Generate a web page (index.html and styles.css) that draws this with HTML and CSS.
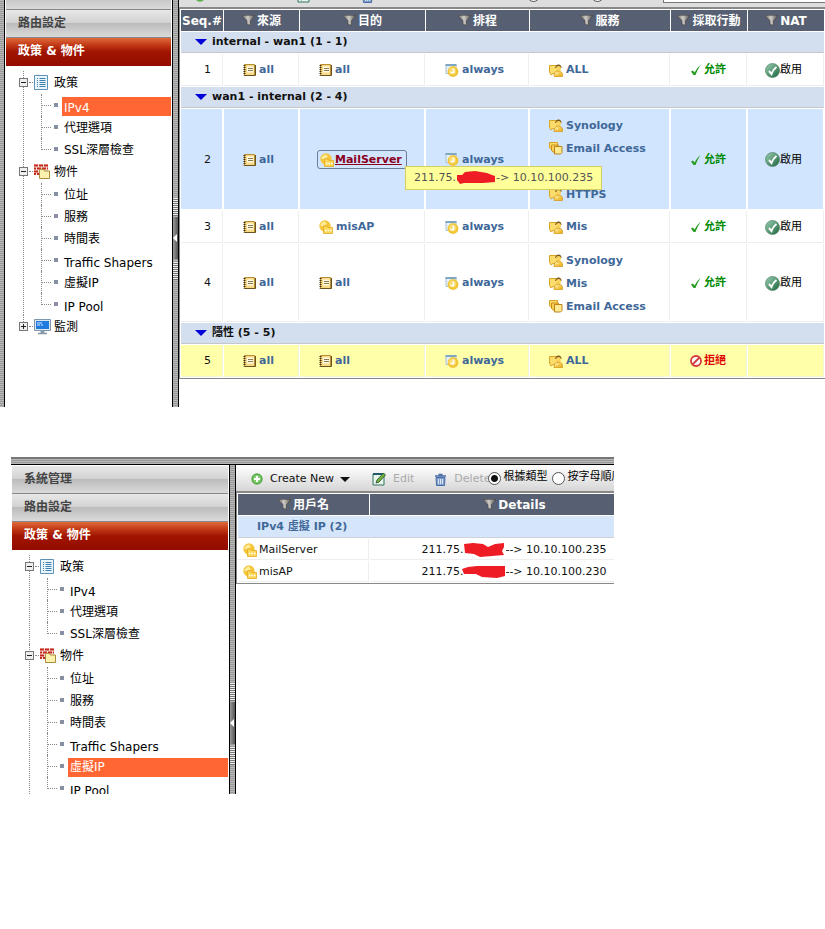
FILE: index.html
```html
<!DOCTYPE html>
<html lang="zh-Hant">
<head>
    <meta charset="UTF-8">
    <meta name="viewport" content="width=device-width, initial-scale=1.0">
    <title>政策 &amp; 物件</title>
    <link rel="stylesheet" href="styles.css">
</head>
<body>
    <!-- Icons -->
    <svg class="sprite" aria-hidden="true">
        <defs>
            <linearGradient id="g-gold" x1="0" y1="0" x2="1" y2="1"><stop offset="0" stop-color="#ffe98a"/><stop offset="1" stop-color="#e9ae1c"/></linearGradient>
            <linearGradient id="g-funnel"><stop offset="0" stop-color="#6c6a68"/><stop offset=".45" stop-color="#d0cdc8"/><stop offset="1" stop-color="#55524e"/></linearGradient>
            <linearGradient id="g-green" x1="0" y1="0" x2="1" y2="1"><stop offset="0" stop-color="#9fd2b4"/><stop offset="1" stop-color="#17623c"/></linearGradient>
        </defs>
        <symbol id="funnel" viewBox="0 0 13 11"><path d="M.3.300h12.400v1L8.500 5.500v5l-3.500-1.500V5.500L.3 1.300z" fill="url(#g-funnel)" stroke="#45423f" stroke-width=".6"/></symbol>
        <symbol id="book" viewBox="0 0 13 12">
            <path d="M1.500.5h10v11h-10z" fill="#f8da86" stroke="#b98f35"/><path d="M12.500 1v10.500H2" fill="none" stroke="#6b5320"/>
            <path d="M4 2.500h6.500v6H4z" fill="#fffbe6"/><path d="M5 4.500h5M5 6.500h5" stroke="#8c7a4c"/>
            <path d="M1.500 1v10.500" stroke="#3b2b0c" stroke-width="2" stroke-dasharray="1 1"/>
        </symbol>
        <symbol id="vip" viewBox="0 0 14 14">
            <circle cx="6" cy="6" r="5.700" fill="#f5c63a"/><path d="M1.500 6q0-4 4.500-4.500L8 4 4 6z" fill="#ffeb9a"/>
            <path d="M4.500 6h3.500l1 1.500h4.500v6h-9z" fill="#fbd75a" stroke="#e3a91e" stroke-width=".8"/><path d="M6 10.500h1.500M8.500 10.500H10M11 10.500h1.500" stroke="#fff" stroke-width="1.500"/>
        </symbol>
        <symbol id="clock" viewBox="0 0 14 13">
            <path d="M1 .5h10v9H1z" fill="#e6f0f7" stroke="#a9c2d3"/><path d="M.5 0h11v2H.5z" fill="#7fa6c3"/>
            <circle cx="8" cy="7.500" r="5.400" fill="#f2c537"/><circle cx="7.500" cy="7" r="3.500" fill="#f9dc72"/><path d="M8.500 4.500v4h-3" stroke="#fff" stroke-width="1.500" fill="none"/>
        </symbol>
        <symbol id="svc" viewBox="0 0 14 13">
            <path d="M.5 1.500h8v8H4l-2 1.500-1.500-3z" fill="#fbdc6c" stroke="#dba524"/>
            <path d="M6 4q1-4 4-3.500 2.700.5 2.500 3.500" fill="#7a5a20"/><circle cx="9.500" cy="4.500" r="2.500" fill="#f9d560"/>
            <path d="M5 12.500q0-5.500 4.500-5.500t4 5.500z" fill="url(#g-gold)" stroke="#d79b1c" stroke-width=".8"/><path d="M6 9.500q1.500-1.500 3 .5" stroke="#fff0ae" fill="none"/>
        </symbol>
        <symbol id="svcgroup" viewBox="0 0 14 13">
            <path d="M.5.5h8v7H3L.5 6z" fill="#fbdc6c" stroke="#d9a222"/><path d="M2.500 3h7v7.500H5l-2.500-2z" fill="#f8cf52" stroke="#c88f18"/>
            <path d="M5.500 4.500h7.500v6L11.500 12h-6z" fill="#ffe88e" stroke="#b9851a"/>
        </symbol>
        <symbol id="tick" viewBox="0 0 12 12"><path d="M1 7.500l2-1 1.500 2Q7 3.500 10.500 1q-3 4.500-5 10h-2z" fill="#2a9c22"/></symbol>
        <symbol id="deny" viewBox="0 0 12 12"><circle cx="6" cy="6" r="5" fill="#fff" stroke="#d63a3a" stroke-width="1.800"/><path d="M2.500 9.500l7-7" stroke="#d63a3a" stroke-width="1.800"/></symbol>
        <symbol id="enabled" viewBox="0 0 15 15"><circle cx="7.500" cy="7.500" r="7" fill="url(#g-green)" stroke="#4e7f64" stroke-width=".7"/><path d="M4 8l2.500 3Q8 6.500 11.500 4" fill="none" stroke="#fff" stroke-width="2"/></symbol>
        <symbol id="policy" viewBox="0 0 14 15">
            <path d="M.5.5h13v14H.5z" fill="#eaf5fc" stroke="#5c93b8"/>
            <path d="M3 3.500h1M5.500 3.500h6M3 5.500h1M5.500 5.500h6M3 7.500h1M5.500 7.500h6M3 9.500h1M5.500 9.500h6M3 11.500h1M5.500 11.500h6" stroke="#3d7fae"/>
        </symbol>
        <symbol id="objects" viewBox="0 0 16 15">
            <path d="M0 0h14v10H0z" fill="#f3dcd5"/>
            <path d="M0 1.500h14M0 7.500h8" stroke="#c6281c" stroke-width="2" stroke-dasharray="4 1"/><path d="M0 4.500h14M0 10h5" stroke="#c6281c" stroke-width="2" stroke-dasharray="4 1" stroke-dashoffset="2"/>
            <path d="M5.500 6.500q0-1 1-1h3l1 1.500h5v7.500h-10z" fill="#fdf1b0" stroke="#a78e3a"/>
        </symbol>
        <symbol id="monitor" viewBox="0 0 17 16">
            <path d="M.5.500h16v11H.5z" fill="#dce6ee" stroke="#7f97aa"/><path d="M2 2h13v8H2z" fill="#1f7be0"/>
            <path d="M3 4h5M3 6h3M7 6h2" stroke="#d7ecff"/><path d="M6.500 12h4v2h-4z" fill="#8f9dab"/><path d="M4 14.500h9" stroke="#8497a8" stroke-width="1.500"/>
        </symbol>
        <symbol id="add" viewBox="0 0 12 12"><circle cx="6" cy="6" r="5.700" fill="#5cae4c"/><circle cx="6" cy="6" r="4" fill="#82ca70"/><path d="M6 3v6M3 6h6" stroke="#fff" stroke-width="2"/></symbol>
        <symbol id="edit" viewBox="0 0 14 14"><path d="M1 2h11v11H1z" fill="#e8f3ea" stroke="#2e7465"/><path d="M1 2h11" stroke="#235a6b" stroke-width="2"/><path d="M4 11l1-3 6.500-7L13.500 3 7 10z" fill="#73b43c" stroke="#28492c" stroke-width=".8"/></symbol>
        <symbol id="trash" viewBox="0 0 11 13"><path d="M3.500 1.500h4M0 3h11" stroke="#4a6fa8" stroke-width="1.500"/><path d="M1 4.500h9l-.5 8h-8z" fill="#7e9cca" stroke="#4a6fa8"/><path d="M3.500 6v5M5.500 6v5M7.500 6v5" stroke="#dfe9f7"/></symbol>
    </svg>

    <!-- Firewall policy list -->
    <div class="frame frame-policy">
        <div class="edge"></div>
        <nav class="sidebar sidebar-policy">
            <div class="menu-rest"></div>
            <a class="menu" href="#">路由設定</a>
            <a class="menu menu-open" href="#">政策 &amp; 物件</a>
            <ul class="tree">
                <li>
                    <div class="node"><button class="toggle" aria-label="收合"></button><svg width="14" height="15"><use href="#policy"/></svg><a href="#">政策</a></div>
                    <ul>
                        <li><a class="selected latin" href="#">IPv4</a></li>
                        <li><a href="#">代理選項</a></li>
                        <li><a href="#">SSL深層檢查</a></li>
                    </ul>
                </li>
                <li>
                    <div class="node"><button class="toggle" aria-label="收合"></button><svg width="16" height="15"><use href="#objects"/></svg><a href="#">物件</a></div>
                    <ul>
                        <li><a href="#">位址</a></li>
                        <li><a href="#">服務</a></li>
                        <li><a href="#">時間表</a></li>
                        <li><a class="latin" href="#">Traffic Shapers</a></li>
                        <li><a href="#">虛擬IP</a></li>
                        <li><a class="latin" href="#">IP Pool</a></li>
                    </ul>
                </li>
                <li>
                    <div class="node"><button class="toggle closed" aria-label="展開"></button><svg width="17" height="16"><use href="#monitor"/></svg><a href="#">監測</a></div>
                </li>
            </ul>
        </nav>
        <div class="splitter splitter-policy"><div class="grip"></div><button class="handle" aria-label="收合選單"></button><div class="grip"></div></div>
        <main class="main">
            <div class="toolbar-rest">
                <svg class="rest-add" width="12" height="12"><use href="#add"/></svg>
                <svg class="rest-edit" width="14" height="14"><use href="#edit"/></svg>
                <svg class="rest-trash" width="11" height="13"><use href="#trash"/></svg>
                <input class="rest-radio rest-section" type="radio" name="view" aria-label="區段檢視">
                <input class="rest-radio" type="radio" name="view" aria-label="全域檢視">
                <input class="rest-search" type="text" aria-label="搜尋">
            </div>
            <table class="grid policy">
                <colgroup>
                    <col class="c-seq"><col class="c-src"><col class="c-dst"><col class="c-time"><col class="c-svc"><col class="c-act"><col>
                </colgroup>
                <thead>
                    <tr>
                        <th>Seq.#</th>
                        <th><svg width="13" height="11"><use href="#funnel"/></svg>來源</th>
                        <th><svg width="13" height="11"><use href="#funnel"/></svg>目的</th>
                        <th><svg width="13" height="11"><use href="#funnel"/></svg>排程</th>
                        <th><svg width="13" height="11"><use href="#funnel"/></svg>服務</th>
                        <th><svg width="13" height="11"><use href="#funnel"/></svg>採取行動</th>
                        <th><svg width="13" height="11"><use href="#funnel"/></svg>NAT</th>
                    </tr>
                </thead>
                <tbody>
                    <tr class="group"><td colspan="7"><button>internal - wan1 (1 - 1)</button></td></tr>
                    <tr>
                        <td class="seq">1</td>
                        <td><a class="obj" href="#"><svg width="13" height="12"><use href="#book"/></svg>all</a></td>
                        <td><a class="obj" href="#"><svg width="13" height="12"><use href="#book"/></svg>all</a></td>
                        <td><a class="obj" href="#"><svg width="14" height="13"><use href="#clock"/></svg>always</a></td>
                        <td><a class="obj" href="#"><svg width="14" height="13"><use href="#svc"/></svg>ALL</a></td>
                        <td><span class="act accept"><svg width="12" height="12"><use href="#tick"/></svg>允許</span></td>
                        <td><span class="nat"><svg width="15" height="15"><use href="#enabled"/></svg>啟用</span></td>
                    </tr>
                    <tr class="group"><td colspan="7"><button>wan1 - internal (2 - 4)</button></td></tr>
                    <tr class="picked">
                        <td class="seq">2</td>
                        <td><a class="obj" href="#"><svg width="13" height="12"><use href="#book"/></svg>all</a></td>
                        <td>
                            <div class="tip-anchor">
                                <a class="obj hovered" href="#"><svg width="14" height="14"><use href="#vip"/></svg><span>MailServer</span></a>
                                <div class="tip" role="tooltip">211.75.<svg class="mark" width="40" height="14" viewBox="0 0 40 14"><path d="M1 4h5l3-3 10-1 12 2 5 2 3 1v6l-12 1H8l-4 1-3-4z" fill="#ee1c25"/></svg>-&gt; 10.10.100.235</div>
                            </div>
                        </td>
                        <td><a class="obj" href="#"><svg width="14" height="13"><use href="#clock"/></svg>always</a></td>
                        <td>
                            <ul class="services">
                                <li><a class="obj" href="#"><svg width="14" height="13"><use href="#svc"/></svg>Synology</a></li>
                                <li><a class="obj" href="#"><svg width="14" height="13"><use href="#svcgroup"/></svg>Email Access</a></li>
                                <li></li>
                                <li><a class="obj" href="#"><svg width="14" height="13"><use href="#svc"/></svg>HTTPS</a></li>
                            </ul>
                        </td>
                        <td><span class="act accept"><svg width="12" height="12"><use href="#tick"/></svg>允許</span></td>
                        <td><span class="nat"><svg width="15" height="15"><use href="#enabled"/></svg>啟用</span></td>
                    </tr>
                    <tr>
                        <td class="seq">3</td>
                        <td><a class="obj" href="#"><svg width="13" height="12"><use href="#book"/></svg>all</a></td>
                        <td><a class="obj" href="#"><svg width="14" height="14"><use href="#vip"/></svg>misAP</a></td>
                        <td><a class="obj" href="#"><svg width="14" height="13"><use href="#clock"/></svg>always</a></td>
                        <td><a class="obj" href="#"><svg width="14" height="13"><use href="#svc"/></svg>Mis</a></td>
                        <td><span class="act accept"><svg width="12" height="12"><use href="#tick"/></svg>允許</span></td>
                        <td><span class="nat"><svg width="15" height="15"><use href="#enabled"/></svg>啟用</span></td>
                    </tr>
                    <tr>
                        <td class="seq">4</td>
                        <td><a class="obj" href="#"><svg width="13" height="12"><use href="#book"/></svg>all</a></td>
                        <td><a class="obj" href="#"><svg width="13" height="12"><use href="#book"/></svg>all</a></td>
                        <td><a class="obj" href="#"><svg width="14" height="13"><use href="#clock"/></svg>always</a></td>
                        <td>
                            <ul class="services">
                                <li><a class="obj" href="#"><svg width="14" height="13"><use href="#svc"/></svg>Synology</a></li>
                                <li><a class="obj" href="#"><svg width="14" height="13"><use href="#svc"/></svg>Mis</a></li>
                                <li><a class="obj" href="#"><svg width="14" height="13"><use href="#svcgroup"/></svg>Email Access</a></li>
                            </ul>
                        </td>
                        <td><span class="act accept"><svg width="12" height="12"><use href="#tick"/></svg>允許</span></td>
                        <td><span class="nat"><svg width="15" height="15"><use href="#enabled"/></svg>啟用</span></td>
                    </tr>
                    <tr class="group"><td colspan="7"><button>隱性 (5 - 5)</button></td></tr>
                    <tr class="implicit">
                        <td class="seq">5</td>
                        <td><a class="obj" href="#"><svg width="13" height="12"><use href="#book"/></svg>all</a></td>
                        <td><a class="obj" href="#"><svg width="13" height="12"><use href="#book"/></svg>all</a></td>
                        <td><a class="obj" href="#"><svg width="14" height="13"><use href="#clock"/></svg>always</a></td>
                        <td><a class="obj" href="#"><svg width="14" height="13"><use href="#svc"/></svg>ALL</a></td>
                        <td><span class="act refuse"><svg width="12" height="12"><use href="#deny"/></svg>拒絕</span></td>
                        <td></td>
                    </tr>
                </tbody>
            </table>
        </main>
    </div>

    <!-- Virtual IP list -->
    <div class="window">
        <div class="window-top"></div>
        <div class="frame">
            <nav class="sidebar sidebar-vip">
                <a class="menu" href="#">系統管理</a>
                <a class="menu" href="#">路由設定</a>
                <a class="menu menu-open" href="#">政策 &amp; 物件</a>
                <ul class="tree tree-cut">
                    <li>
                        <div class="node"><button class="toggle" aria-label="收合"></button><svg width="14" height="15"><use href="#policy"/></svg><a href="#">政策</a></div>
                        <ul>
                            <li><a class="latin" href="#">IPv4</a></li>
                            <li><a href="#">代理選項</a></li>
                            <li><a href="#">SSL深層檢查</a></li>
                        </ul>
                    </li>
                    <li>
                        <div class="node"><button class="toggle" aria-label="收合"></button><svg width="16" height="15"><use href="#objects"/></svg><a href="#">物件</a></div>
                        <ul>
                            <li><a href="#">位址</a></li>
                            <li><a href="#">服務</a></li>
                            <li><a href="#">時間表</a></li>
                            <li><a class="latin" href="#">Traffic Shapers</a></li>
                            <li><a class="selected" href="#">虛擬IP</a></li>
                            <li class="cut"><a class="latin" href="#">IP Pool</a></li>
                        </ul>
                    </li>
                </ul>
            </nav>
            <div class="splitter splitter-vip"><div class="grip"></div><button class="handle" aria-label="收合選單"></button><div class="grip"></div></div>
            <main class="main">
                <div class="toolbar">
                    <button class="create"><svg width="12" height="12"><use href="#add"/></svg>Create New</button>
                    <button class="edit" disabled><svg width="14" height="14"><use href="#edit"/></svg>Edit</button>
                    <button class="delete" disabled><svg width="11" height="13"><use href="#trash"/></svg>Delete</button>
                    <label class="by-type"><input type="radio" name="sort" checked>根據類型</label>
                    <label><input type="radio" name="sort">按字母順序</label>
                </div>
                <table class="grid vips">
                    <colgroup><col class="c-name"><col></colgroup>
                    <thead>
                        <tr>
                            <th><svg width="13" height="11"><use href="#funnel"/></svg>用戶名</th>
                            <th><svg width="13" height="11"><use href="#funnel"/></svg>Details</th>
                        </tr>
                    </thead>
                    <tbody>
                        <tr class="kind"><td colspan="2">IPv4 虛擬 IP (2)</td></tr>
                        <tr>
                            <td><span class="name"><svg width="14" height="14"><use href="#vip"/></svg>MailServer</span></td>
                            <td><span class="details">211.75.<svg class="mark" width="44" height="16" viewBox="0 0 44 16"><path d="M2 2l9-1 10 1 5 3 7-3 9-1v4l-2 4 2 4-12 1-12 1-6-3-9-1z" fill="#ee1c25"/></svg>--&gt; 10.10.100.235</span></td>
                        </tr>
                        <tr>
                            <td><span class="name"><svg width="14" height="14"><use href="#vip"/></svg>misAP</span></td>
                            <td><span class="details">211.75.<svg class="mark" width="44" height="16" viewBox="0 0 44 16"><path d="M0 5l6-2 9-1 28 0v10l-8 2-15-1-6-3-12 0z" fill="#ee1c25"/></svg>--&gt; 10.10.100.230</span></td>
                        </tr>
                    </tbody>
                </table>
            </main>
        </div>
    </div>
</body>
</html>
```
FILE: styles.css
```css
* {
    box-sizing: border-box;
}

body {
    margin: 0;
    background: #fff;
    color: #111;
    font-family: "DejaVu Sans", "Noto Sans CJK TC", sans-serif;
    font-size: 11px;
    line-height: 16px;
}

a {
    color: inherit;
    text-decoration: none;
}

button {
    border: 0;
    padding: 0;
    background: none;
    color: inherit;
    font: inherit;
}

ul {
    list-style: none;
    margin: 0;
    padding: 0;
}

svg {
    flex: none;
}

.sprite {
    position: absolute;
    width: 0;
    height: 0;
}

/* Frames */
.frame {
    display: flex;
}

.frame-policy {
    margin-bottom: 50px;
}

.window {
    max-width: 603px;
    margin-left: 11px;
    overflow: hidden;
}

.window-top {
    height: 8px;
    border-top: 2px solid #777;
    border-bottom: 1px solid #000;
    background: repeating-linear-gradient(#b8b8b8 0 1px, #999 1px 2px);
}

.edge {
    width: 5px;
    border-right: 1px solid #000;
    background: repeating-linear-gradient(#b8b8b8 0 1px, #999 1px 2px);
}

.main {
    flex: 1;
    min-width: 0;
    overflow: hidden;
}

/* Side menu */
.sidebar {
    flex: none;
    padding: 0 1px;
}

.sidebar-policy {
    width: 167px;
    padding-bottom: 69px;
}

.sidebar-vip {
    width: 218px;
    padding-top: 1px;
}

.menu {
    display: block;
    height: 28px;
    padding-left: 12px;
    border-bottom: 1px solid #888;
    background: linear-gradient(#e8e8e8, #d2d2d2 48%, #bcbcbc 50%, #dadada);
    color: #444;
    font-size: 12px;
    font-weight: bold;
    line-height: 26px;
}

.menu-rest {
    height: 10px;
    border-bottom: 1px solid #888;
    background: linear-gradient(#c8c8c8, #dadada);
}

.menu-open {
    border-bottom: 0;
    background: linear-gradient(#e06a3c, #c23a16 25%, #a01400 50%, #940c00);
    color: #fff;
}

/* Tree */
.tree {
    padding-top: 5px;
    font-size: 12px;
    color: #000;
}

.tree > li {
    position: relative;
}

.tree > li::before {
    content: "";
    position: absolute;
    left: 17px;
    top: 0;
    bottom: 0;
    border-left: 1px dotted #888;
}

.tree > li:last-child::before {
    bottom: 12px;
}

.tree-cut > li:last-child::before {
    bottom: 0;
}

.node {
    display: flex;
    align-items: center;
    height: 23px;
    padding-left: 13px;
}

.node svg {
    margin-left: 6px;
}

.node a {
    position: absolute;
    left: 48px;
    line-height: 20px;
}

.toggle {
    position: relative;
    width: 9px;
    height: 9px;
    border: 1px solid #777;
    background: linear-gradient(90deg, #222, #222) center / 5px 1px no-repeat, #eee;
}

.toggle.closed {
    background: linear-gradient(#222, #222) center / 5px 1px no-repeat, linear-gradient(#222, #222) center / 1px 5px no-repeat, #eee;
}

.toggle::after {
    content: "";
    position: absolute;
    left: 9px;
    top: 3px;
    width: 4px;
    border-top: 1px dotted #888;
}

.tree ul li {
    position: relative;
    height: 22px;
    padding: 3px 0 0 56px;
}

.tree ul li.cut {
    height: 17px;
    overflow: hidden;
}

/* branch lines */
.tree ul li::before {
    content: "";
    position: absolute;
    left: 35px;
    top: 0;
    bottom: 0;
    width: 10px;
    border-left: 1px dotted #888;
    background: repeating-linear-gradient(90deg, #888 0 1px, transparent 1px 2px) 0 11px / 100% 1px no-repeat;
}

.tree ul li:last-child::before {
    bottom: auto;
    height: 12px;
}

/* bullet */
.tree ul li::after {
    content: "";
    position: absolute;
    left: 48px;
    top: 9px;
    width: 4px;
    height: 4px;
    background: #8790a2;
}

.tree ul a {
    display: block;
    height: 19px;
    padding-left: 2px;
    line-height: 19px;
    white-space: nowrap;
}

.tree ul a.latin {
    line-height: 22px;
}

.tree ul a.selected {
    background: #ff6633;
    color: #fff;
}

/* Splitter */
.splitter {
    flex: none;
    width: 7px;
    border: solid #000;
    border-width: 0 1px;
    background: repeating-linear-gradient(#b8b8b8 0 1px, #999 1px 2px);
}

.splitter-policy {
    padding-top: 198px;
}

.splitter-vip {
    padding-top: 218px;
}

.grip {
    height: 18px;
    background: repeating-linear-gradient(#eee 0 1px, #777 1px 2px);
}

.handle {
    display: flex;
    align-items: center;
    width: 5px;
    height: 42px;
    margin: 1px 0 3px;
    background: linear-gradient(90deg, #999, #555);
}

.handle::before {
    content: "";
    border: solid transparent;
    border-width: 4px 4px 4px 0;
    border-right-color: #fff;
}

/* Toolbars */
input[type="radio"] {
    flex: none;
    appearance: none;
    width: 13px;
    height: 13px;
    margin: 0;
    border: 1px solid #555;
    border-radius: 50%;
    background: #fff;
}

.toolbar-rest {
    display: flex;
    align-items: flex-end;
    height: 9px;
    padding: 0 0 4px 15px;
    border-bottom: 2px solid #888;
    background: #dedede;
    overflow: hidden;
}

.rest-add {
    margin-bottom: 1px;
}

.rest-edit {
    margin-left: 91px;
}

.rest-trash {
    margin-left: 51px;
}

input.rest-radio {
    margin: 0 0 1px 51px;
}

input.rest-section {
    margin-left: 154px;
}

.rest-search {
    flex: 1;
    min-width: 0;
    height: 20px;
    margin: 0 -2px 0 59px;
    border: 1px solid #777;
    background: #fff;
}

.toolbar {
    display: flex;
    align-items: center;
    height: 28px;
    padding-left: 15px;
    border-bottom: 2px solid #888;
    background: linear-gradient(#fff, #d6d6d6);
    white-space: nowrap;
}

.toolbar button,
.toolbar label {
    display: flex;
    flex: none;
    align-items: center;
}

.toolbar button {
    height: 26px;
    padding-top: 2px;
}

.toolbar button svg {
    margin-right: 7px;
}

.toolbar .delete svg {
    margin-right: 8px;
}

.toolbar button:disabled {
    color: #aaa;
}

.create::after {
    content: "";
    margin-left: 6px;
    border: solid transparent;
    border-width: 5px 5px 0;
    border-top-color: #111;
}

.toolbar .edit {
    margin-left: 22px;
}

.toolbar .delete {
    margin-left: 21px;
}

.toolbar label {
    height: 22px;
    margin: 0 0 2px 4px;
    color: #000;
}

.toolbar .by-type {
    margin-left: -3px;
}

.toolbar input[type="radio"] {
    margin: 2px 3px 0 0;
}

.toolbar input[type="radio"]:checked {
    background: radial-gradient(#111 0 3px, #fff 4px);
}

/* Tables */
.grid {
    width: 100%;
    table-layout: fixed;
    border-collapse: separate;
    border-spacing: 1px;
    border: solid #888;
    border-width: 0 0 1px 1px;
}

.c-seq { width: 42px; }
.c-src { width: 75px; }
.c-dst { width: 125px; }
.c-time { width: 103px; }
.c-svc { width: 140px; }
.c-act { width: 76px; }
.c-name { width: 131px; }

.grid th {
    height: 21px;
    padding: 0;
    background: #566072;
    color: #fff;
    font-size: 12px;
    line-height: 20px;
    white-space: nowrap;
}

.grid th svg {
    margin-right: 2px;
    vertical-align: -1px;
}

.grid td {
    height: 32px;
    padding: 0;
    border: solid #eee;
    border-width: 0 1px 1px 0;
}

.policy td {
    padding: 1px 0 0 19px;
}

.policy td.seq {
    padding: 1px 11px 0 0;
    text-align: right;
}

.policy .group td {
    height: 21px;
    padding: 0 0 0 14px;
    border: 0;
    border-bottom: 1px solid #c4c8cc;
    background: #d3dfee;
}

.group button {
    display: flex;
    align-items: center;
    height: 20px;
    color: #111;
    font-weight: bold;
}

.group button::before {
    content: "";
    margin-right: 5px;
    border: solid transparent;
    border-width: 6px 6px 0;
    border-top-color: #0000d8;
}

.policy .picked td {
    border-color: #fff;
    background: #d1e5fe;
}

.policy .implicit td {
    border-color: #f4f4d8;
    background: #ffffaa;
}

.obj {
    display: flex;
    align-items: center;
    color: #3f6899;
    font-weight: bold;
    white-space: nowrap;
}

.obj svg {
    margin-right: 3px;
}

.services {
    padding: 4px 0 3px;
}

.services li {
    display: flex;
    align-items: center;
    height: 23px;
}

.act,
.nat {
    display: flex;
    align-items: center;
}

.act {
    font-weight: bold;
}

.act svg {
    margin-right: 2px;
}

.accept {
    color: #008a00;
}

.refuse {
    color: #e00000;
}

.nat {
    margin-left: -2px;
    color: #000;
}

/* Tooltip on the hovered object */
.tip-anchor {
    position: relative;
    width: 90px;
    margin-left: -2px;
}

.obj.hovered {
    height: 19px;
    padding-left: 2px;
    border: 1px solid #6c7f96;
    border-radius: 3px;
    color: #8b0020;
}

.hovered svg {
    margin-right: 1px;
}

.hovered span {
    text-decoration: underline;
}

.tip {
    display: flex;
    align-items: center;
    position: absolute;
    left: 88px;
    top: 16px;
    z-index: 1;
    height: 24px;
    padding: 0 8px;
    border: 1px solid #d6cf5e;
    background: #ffff99;
    color: #555;
    white-space: nowrap;
}

.vips {
    width: calc(100% + 46px);
}

.vips td {
    height: 21px;
    padding-top: 1px;
}

.vips .kind td {
    height: 22px;
    padding: 0 0 0 19px;
    border: 0;
    border-bottom: 1px solid #ccd2d8;
    background: #d6e6fa;
    color: #3f6899;
    font-weight: bold;
}

.name {
    display: flex;
    align-items: center;
    gap: 2px;
    padding-left: 5px;
}

.details {
    display: flex;
    align-items: center;
    justify-content: center;
}

.details .mark {
    margin: 0 -1px;
}
```
